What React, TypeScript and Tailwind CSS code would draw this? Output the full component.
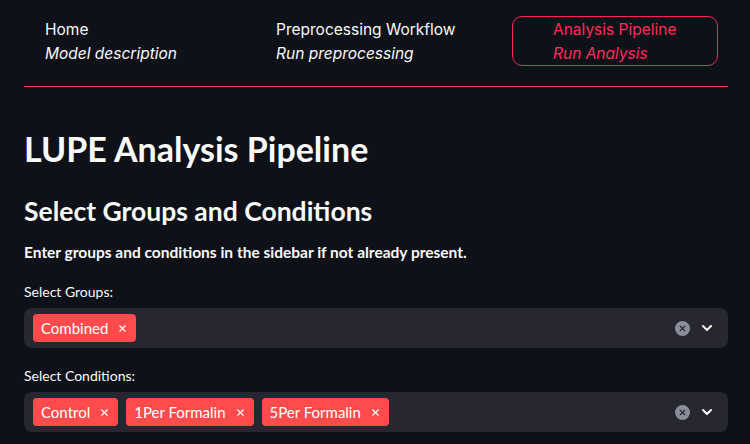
import { X, ChevronDown } from 'lucide-react'

const navItems = [
  { title: 'Home', sub: 'Model description', active: false, cls: 'ml-[4px] w-[206px]' },
  { title: 'Preprocessing Workflow', sub: 'Run preprocessing', active: false, cls: 'ml-[25px] w-[206px]' },
  { title: 'Analysis Pipeline', sub: 'Run Analysis', active: true, cls: 'ml-[71px] w-[206px]' },
]

function Tag({ label }: { label: string }) {
  return (
    <div className="flex h-[28px] items-center rounded-[4px] bg-[#ff4b4b] pl-[8px] pr-[8px] text-[15px] text-white">
      <span>{label}</span>
      <X className="ml-[9px] h-[11px] w-[11px]" strokeWidth={2.5} />
    </div>
  )
}

function MultiSelect({ label, tags }: { label: string; tags: string[] }) {
  return (
    <div>
      <div className="h-[24px] text-[14px] leading-[24px] text-[#fafafa]">{label}</div>
      <div className="mt-[4px] flex h-[40px] items-center rounded-[8px] bg-[#262730] pl-[9px] pr-[13px]">
        <div className="flex flex-1 items-center gap-[8px]">
          {tags.map((t) => (
            <Tag key={t} label={t} />
          ))}
        </div>
        <div className="flex h-[15px] w-[15px] items-center justify-center rounded-full bg-[#8b8d98]">
          <X className="h-[9px] w-[9px] text-[#262730]" strokeWidth={3} />
        </div>
        <ChevronDown className="ml-[9px] h-[16px] w-[16px] text-white" strokeWidth={3} />
      </div>
    </div>
  )
}

export default function App() {
  return (
    <div className="min-h-[444px] w-[750px] overflow-hidden bg-[#0e1117] text-[#fafafa]" style={{ fontFamily: 'Lato, sans-serif' }}>
      {/* top navigation */}
      <div className="flex pt-[16px]" style={{ fontFamily: 'Inter, sans-serif' }}>
        {navItems.map((n) => (
          <div
            key={n.title}
            className={`${n.cls} h-[50px] whitespace-nowrap rounded-[10px] border pl-[40px] ${
              n.active ? 'border-[#f0295a] text-[#ff2b5b]' : 'border-transparent text-[#fafafa]'
            }`}
          >
            <div className="text-[15.5px] leading-[25px]">{n.title}</div>
            <div className="text-[15.5px] italic leading-[23px]">{n.sub}</div>
          </div>
        ))}
      </div>
      <div className="ml-[24px] mr-[22px] mt-[20px] h-px bg-[#e8474c]" />

      <div className="pl-[24px] pr-[22px]">
        <h1 className="mt-[38px] text-[34px] font-bold leading-[48px]">LUPE Analysis Pipeline</h1>
        <h2 className="mt-[20px] text-[26.5px] font-bold leading-[36px]">Select Groups and Conditions</h2>
        <p className="mt-[11px] text-[15.5px] font-bold leading-[24px]">
          Enter groups and conditions in the sidebar if not already present.
        </p>
        <div className="mt-[16px]">
          <MultiSelect label="Select Groups:" tags={['Combined']} />
        </div>
        <div className="mt-[16px]">
          <MultiSelect label="Select Conditions:" tags={['Control', '1Per Formalin', '5Per Formalin']} />
        </div>
      </div>
    </div>
  )
}
